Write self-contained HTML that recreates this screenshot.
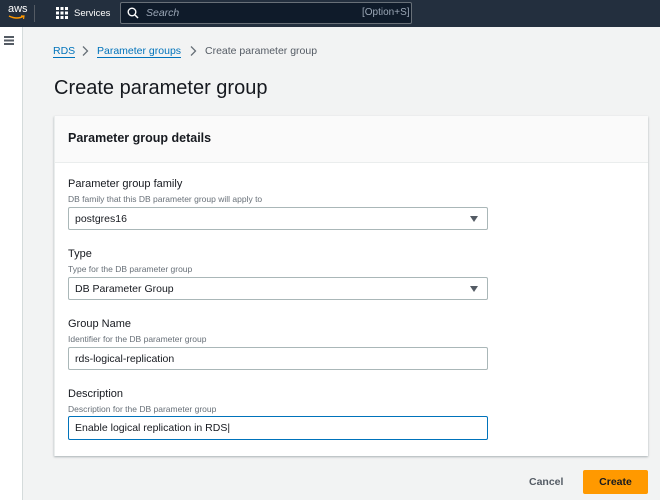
<!DOCTYPE html>
<html><head><style>
*{box-sizing:border-box;margin:0;padding:0}
body{width:660px;height:500px;overflow:hidden;font-family:"Liberation Sans",sans-serif;background:#f2f3f3;position:relative;color:#16191f}
.nav{position:absolute;left:0;top:0;width:660px;height:27px;background:#232f3e}
.side{position:absolute;left:0;top:27px;width:23px;height:473px;background:#fff;border-right:1px solid #d5dbdb}
.abs{position:absolute;white-space:nowrap}
.card{position:absolute;left:54px;top:116px;width:594px;height:340px;background:#fff;box-shadow:0 1px 2px rgba(0,28,36,.3);border-left:1px solid #eaeded}
.hdr{position:absolute;left:0;top:0;width:100%;height:47px;background:#fafafa;border-bottom:1px solid #eaeded}
.lbl{font-size:11px;color:#16191f}
.desc{font-size:8.5px;color:#687078}
.inp{position:absolute;left:68px;width:420px;height:23px;border:1px solid #aab7b8;border-radius:2px;background:#fff;font-size:10.5px;padding:5px 6px}
.tri{position:absolute;right:9px;top:8px;width:0;height:0;border-left:4.5px solid transparent;border-right:4.5px solid transparent;border-top:6px solid #545b64}
</style></head><body>
<div class="nav">
 <div class="abs" style="left:8px;top:3px;color:#fff;font-size:11px">aws</div>
 <svg class="abs" style="left:8px;top:15px" width="18" height="6"><path d="M1 1 Q9 5 16 1" stroke="#ff9900" stroke-width="1.5" fill="none"/><path d="M13 1 L16 1 L15.5 4" stroke="#ff9900" stroke-width="1.2" fill="none"/></svg>
 <div class="abs" style="left:34px;top:5px;width:1px;height:17px;background:#545b64"></div>
 <svg class="abs" style="left:56px;top:7px" width="12" height="12" fill="#fff"><rect x="0" y="0" width="3" height="3"/><rect x="4.5" y="0" width="3" height="3"/><rect x="9" y="0" width="3" height="3"/><rect x="0" y="4.5" width="3" height="3"/><rect x="4.5" y="4.5" width="3" height="3"/><rect x="9" y="4.5" width="3" height="3"/><rect x="0" y="9" width="3" height="3"/><rect x="4.5" y="9" width="3" height="3"/><rect x="9" y="9" width="3" height="3"/></svg>
 <div class="abs" style="left:74px;top:8px;color:#fff;font-size:9.5px">Services</div>
 <div class="abs" style="left:120px;top:2px;width:292px;height:22px;border:1px solid #687078;border-radius:2px;background:#0f1b2a"></div>
 <svg class="abs" style="left:127px;top:7px" width="12" height="12"><circle cx="5" cy="5" r="3.8" stroke="#fff" stroke-width="1.4" fill="none"/><path d="M8 8 L11 11" stroke="#fff" stroke-width="1.5"/></svg>
 <div class="abs" style="left:146px;top:7px;color:#9ba7b6;font-size:10.5px;font-style:italic">Search</div>
 <div class="abs" style="left:362px;top:7px;color:#9ba7b6;font-size:10px">[Option+S]</div>
</div>
<div class="side"><div class="abs" style="left:4px;top:9px;width:10px;height:1.5px;background:#545b64;box-shadow:0 3.5px 0 #545b64,0 7px 0 #545b64"></div></div>
<div class="abs" style="left:53px;top:45px;font-size:10.5px;color:#0073bb;border-bottom:1px solid #0073bb;line-height:12px">RDS</div>
<svg class="abs" style="left:81px;top:45px" width="8" height="12"><path d="M2 1.5 L6.5 6 L2 10.5" stroke="#687078" stroke-width="1.3" fill="none"/></svg>
<div class="abs" style="left:97px;top:45px;font-size:10.5px;color:#0073bb;border-bottom:1px solid #0073bb;line-height:12px">Parameter groups</div>
<svg class="abs" style="left:189px;top:45px" width="8" height="12"><path d="M2 1.5 L6.5 6 L2 10.5" stroke="#687078" stroke-width="1.3" fill="none"/></svg>
<div class="abs" style="left:205px;top:45px;font-size:10.5px;color:#545b64;line-height:12px">Create parameter group</div>
<div class="abs" style="left:54px;top:77px;font-size:20px;color:#16191f">Create parameter group</div>
<div class="card"><div class="hdr"></div></div>
<div class="abs" style="left:68px;top:131px;font-size:12.5px;font-weight:bold">Parameter group details</div>

<div class="abs lbl" style="left:68px;top:178px">Parameter group family</div>
<div class="abs desc" style="left:68px;top:194px">DB family that this DB parameter group will apply to</div>
<div class="inp" style="top:207px">postgres16<div class="tri"></div></div>

<div class="abs lbl" style="left:68px;top:248px">Type</div>
<div class="abs desc" style="left:68px;top:264px">Type for the DB parameter group</div>
<div class="inp" style="top:277px">DB Parameter Group<div class="tri"></div></div>

<div class="abs lbl" style="left:68px;top:318px">Group Name</div>
<div class="abs desc" style="left:68px;top:334px">Identifier for the DB parameter group</div>
<div class="inp" style="top:347px">rds-logical-replication</div>

<div class="abs lbl" style="left:68px;top:388px">Description</div>
<div class="abs desc" style="left:68px;top:404px">Description for the DB parameter group</div>
<div class="inp" style="top:416px;height:24px;border:1.5px solid #0073bb">Enable logical replication in RDS|</div>

<div class="abs" style="left:529px;top:476px;font-size:10.5px;font-weight:bold;color:#545b64">Cancel</div>
<div class="abs" style="left:583px;top:470px;width:65px;height:24px;background:#ff9900;border-radius:2px;font-size:10.5px;font-weight:bold;text-align:center;line-height:24px;color:#16191f">Create</div>
</body></html>
